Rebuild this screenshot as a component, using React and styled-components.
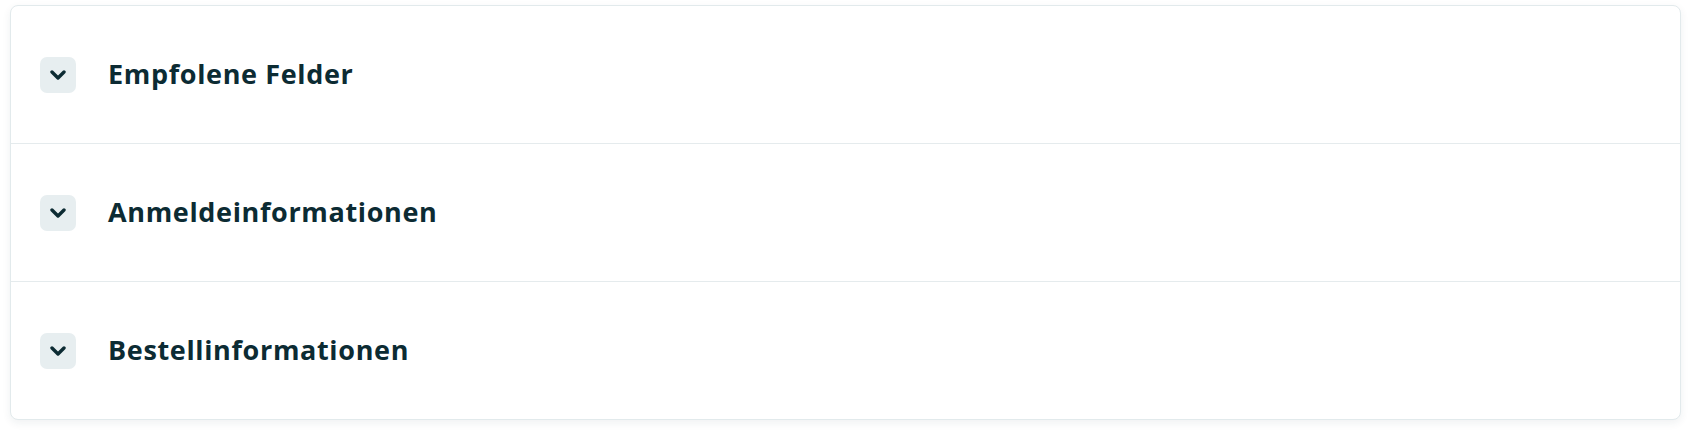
import React from "react";
import styled, { createGlobalStyle } from "styled-components";

const Global = createGlobalStyle`
  html, body { margin: 0; padding: 0; background: #ffffff; }
  body { font-family: "Open Sans", "Liberation Sans", sans-serif; }
`;

const Page = styled.div`
  padding: 5px 9px 12px 10px;
`;

const Card = styled.div`
  background: #ffffff;
  border: 1px solid #e2eaec;
  border-radius: 8px;
  box-shadow: 0 3px 8px rgba(30, 60, 70, 0.07);
  overflow: hidden;
`;

const Row = styled.div`
  height: 137px;
  display: flex;
  align-items: center;
  padding-left: 29px;
  gap: 32px;
  border-top: ${(p) => (p.$first ? "none" : "1px solid #e5ebed")};
  box-sizing: content-box;
`;

const Toggle = styled.div`
  width: 36px;
  height: 36px;
  border-radius: 7px;
  background: #e7eef0;
  display: flex;
  align-items: center;
  justify-content: center;
  flex-shrink: 0;
`;

const Title = styled.div`
  font-family: "Open Sans", "Liberation Sans", sans-serif;
  font-weight: 700;
  font-size: 27px;
  line-height: 1.2;
  margin-top: -1px;
  color: #0c2b33;
  letter-spacing: 0.65px;
`;

const Chevron = () => (
  <svg width="16" height="10" viewBox="0 0 16 10" aria-hidden="true">
    <path
      d="M2 2 L8 8 L14 2"
      fill="none"
      stroke="#0c2b33"
      strokeWidth="3.4"
      strokeLinecap="round"
      strokeLinejoin="round"
    />
  </svg>
);

const sections = ["Empfolene Felder", "Anmeldeinformationen", "Bestellinformationen"];

export default function App() {
  return (
    <>
      <Global />
      <Page>
        <Card>
          {sections.map((s, i) => (
            <Row key={s} $first={i === 0}>
              <Toggle>
                <Chevron />
              </Toggle>
              <Title>{s}</Title>
            </Row>
          ))}
        </Card>
      </Page>
    </>
  );
}
